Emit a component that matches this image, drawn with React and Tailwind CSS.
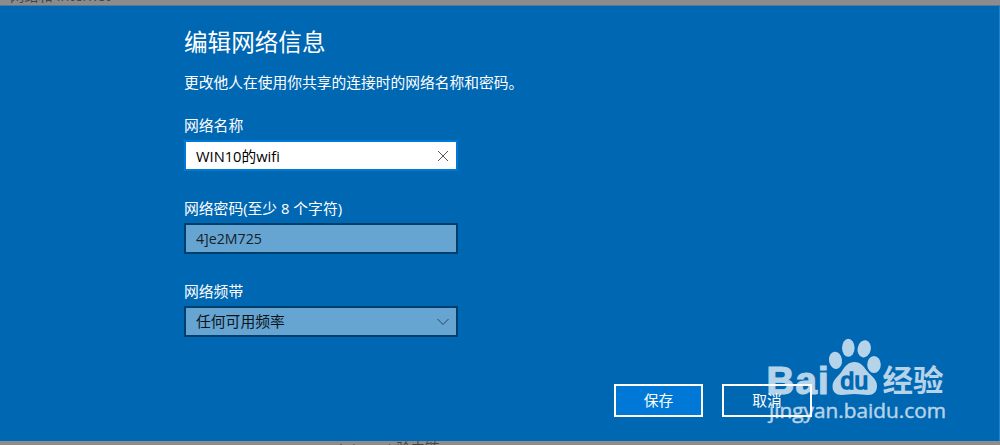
import React, { useState } from 'react';

const Label = ({ children }) => (
  <p className="-mt-px h-[23px] text-[14.8px] leading-[22px] text-white whitespace-pre">{children}</p>
);

// Paw logo with the site name below it
const Watermark = () => (
  <svg
    className="absolute left-[760px] top-[330px] pointer-events-none"
    width="200"
    height="100"
    viewBox="760 330 200 100"
  >
    <g fill="#ffffff" opacity="0.71">
      <text
        x="766.5 795.5 818"
        y="393.8"
        fontSize="38.5"
        fontWeight="700"
        stroke="#ffffff"
        strokeWidth="1.2"
        fontFamily="Liberation Sans, sans-serif"
      >
        Bai
      </text>
      <ellipse cx="835.5" cy="360.3" rx="6.5" ry="8.7" transform="rotate(-8 835.5 360.3)" />
      <ellipse cx="848.3" cy="347.8" rx="6.3" ry="9" />
      <ellipse cx="864.2" cy="348.8" rx="6.6" ry="8.7" transform="rotate(12 864.2 348.8)" />
      <ellipse cx="874" cy="364.5" rx="6.8" ry="8.6" />
      <path d="M854.500 362c-6 0-9.500 4-12.500 9-3.500 5.500-9.500 8.500-9.500 15.500 0 5.500 3.500 8.500 9 8.500 4.500 0 8-1 13-1s9 1 13.500 1c5.500 0 9-3 9-9 0-7-6-10-10-15-3.500-5-6.500-9-12.500-9z" />
    </g>
    <text
      x="840.5 854.5"
      y="388.8"
      fontSize="24.5"
      fontWeight="400"
      fill="#0067b3"
      stroke="#0067b3"
      strokeWidth="1.5"
      fontFamily="Liberation Sans, sans-serif"
    >
      du
    </text>
    <g fill="#ffffff" opacity="0.71">
      <text
        x="882.5"
        y="391"
        fontSize="30"
        fontWeight="700"
        textLength="61"
        lengthAdjust="spacingAndGlyphs"
        fontFamily="Noto Sans CJK SC, sans-serif"
      >
        经验
      </text>
      <text
        x="769"
        y="417.5"
        fontSize="20"
        stroke="#ffffff"
        strokeWidth="0.4"
        textLength="177"
        lengthAdjust="spacingAndGlyphs"
        fontFamily="Open Sans, Noto Sans, sans-serif"
      >
        jingyan.baidu.com
      </text>
    </g>
  </svg>
);

const App = () => {
  const [name, setName] = useState('WIN10的wifi');

  return (
    <div className="relative w-[1000px] h-[445px] flex flex-col overflow-hidden bg-[#8c8c8c] font-['Open_Sans','Noto_Sans_CJK_SC',sans-serif]">
      {/* Dimmed page above the dialog */}
      <div className="h-[6px] shrink-0 flex flex-col justify-end overflow-hidden border-b border-[#527998] pl-[10px] text-[14.3px] leading-[18px] text-[#444444]">
        <p className="h-[18px] shrink-0 whitespace-pre">网络和 Internet</p>
      </div>

      {/* Dialog */}
      <div className="h-[435px] shrink-0 bg-[#0067b3] border-r border-[#2481c7] pl-[184px] flex flex-col">
        <h1 className="mt-[19px] h-[35px] text-[23.6px] leading-[34px] text-white">编辑网络信息</h1>
        <p className="mt-[11px] h-[23px] text-[14.75px] leading-[22px] text-white">
          更改他人在使用你共享的连接时的网络名称和密码。
        </p>

        <div className="mt-[21px] w-[274px]">
          <Label>网络名称</Label>
          <div className="mt-[3px] h-[31px] flex items-center bg-white border-2 border-[#0078d7] pl-[10px] pr-[7px]">
            <input
              value={name}
              onChange={(e) => setName(e.target.value)}
              className="flex-1 min-w-0 text-[14.7px] leading-[20px] text-black outline-none"
            />
            <svg width="12" height="12" viewBox="0 0 12 12" stroke="#555555" strokeWidth="1">
              <path d="M1 1l10 10M11 1L1 11" />
            </svg>
          </div>
        </div>

        <div className="mt-[27px] w-[274px]">
          <Label>网络密码(至少 8 个字符)</Label>
          <div className="mt-[3px] h-[31px] flex items-center bg-[#66a4d1] border-2 border-[#003e6c] pl-[10px]">
            <p className="text-[14.2px] leading-[20px] text-[#14212b]">4]e2M725</p>
          </div>
        </div>

        <div className="mt-[27px] w-[274px]">
          <Label>网络频带</Label>
          <div className="mt-[3px] h-[31px] flex items-center bg-[#66a4d1] border-2 border-[#003e6c] pl-[10px] pr-[6px]">
            <p className="flex-1 pb-[2px] text-[14.8px] leading-[20px] text-[#0a141c]">任何可用频率</p>
            <svg width="14" height="8" viewBox="0 0 14 8" fill="none" stroke="#29465c" strokeWidth="1">
              <path d="M1.500 1l5.500 5.500L12.500 1" />
            </svg>
          </div>
        </div>

        <div className="mt-[47px] ml-[430px] flex gap-[19px] text-[14.8px] leading-[20px] text-white">
          <button className="w-[89px] h-[33px] pb-[2px] border-2 border-white bg-[#0078d7]">保存</button>
          <button className="w-[90px] h-[33px] pb-[2px] border-2 border-white">取消</button>
        </div>
      </div>

      {/* Dimmed page below the dialog */}
      <div className="h-[4px] shrink-0 overflow-hidden pl-[339px] text-[14.3px] leading-[15px] text-[#444444]">
        <p className="whitespace-pre">Internet 验由链</p>
      </div>

      <Watermark />
    </div>
  );
};

export default App;
